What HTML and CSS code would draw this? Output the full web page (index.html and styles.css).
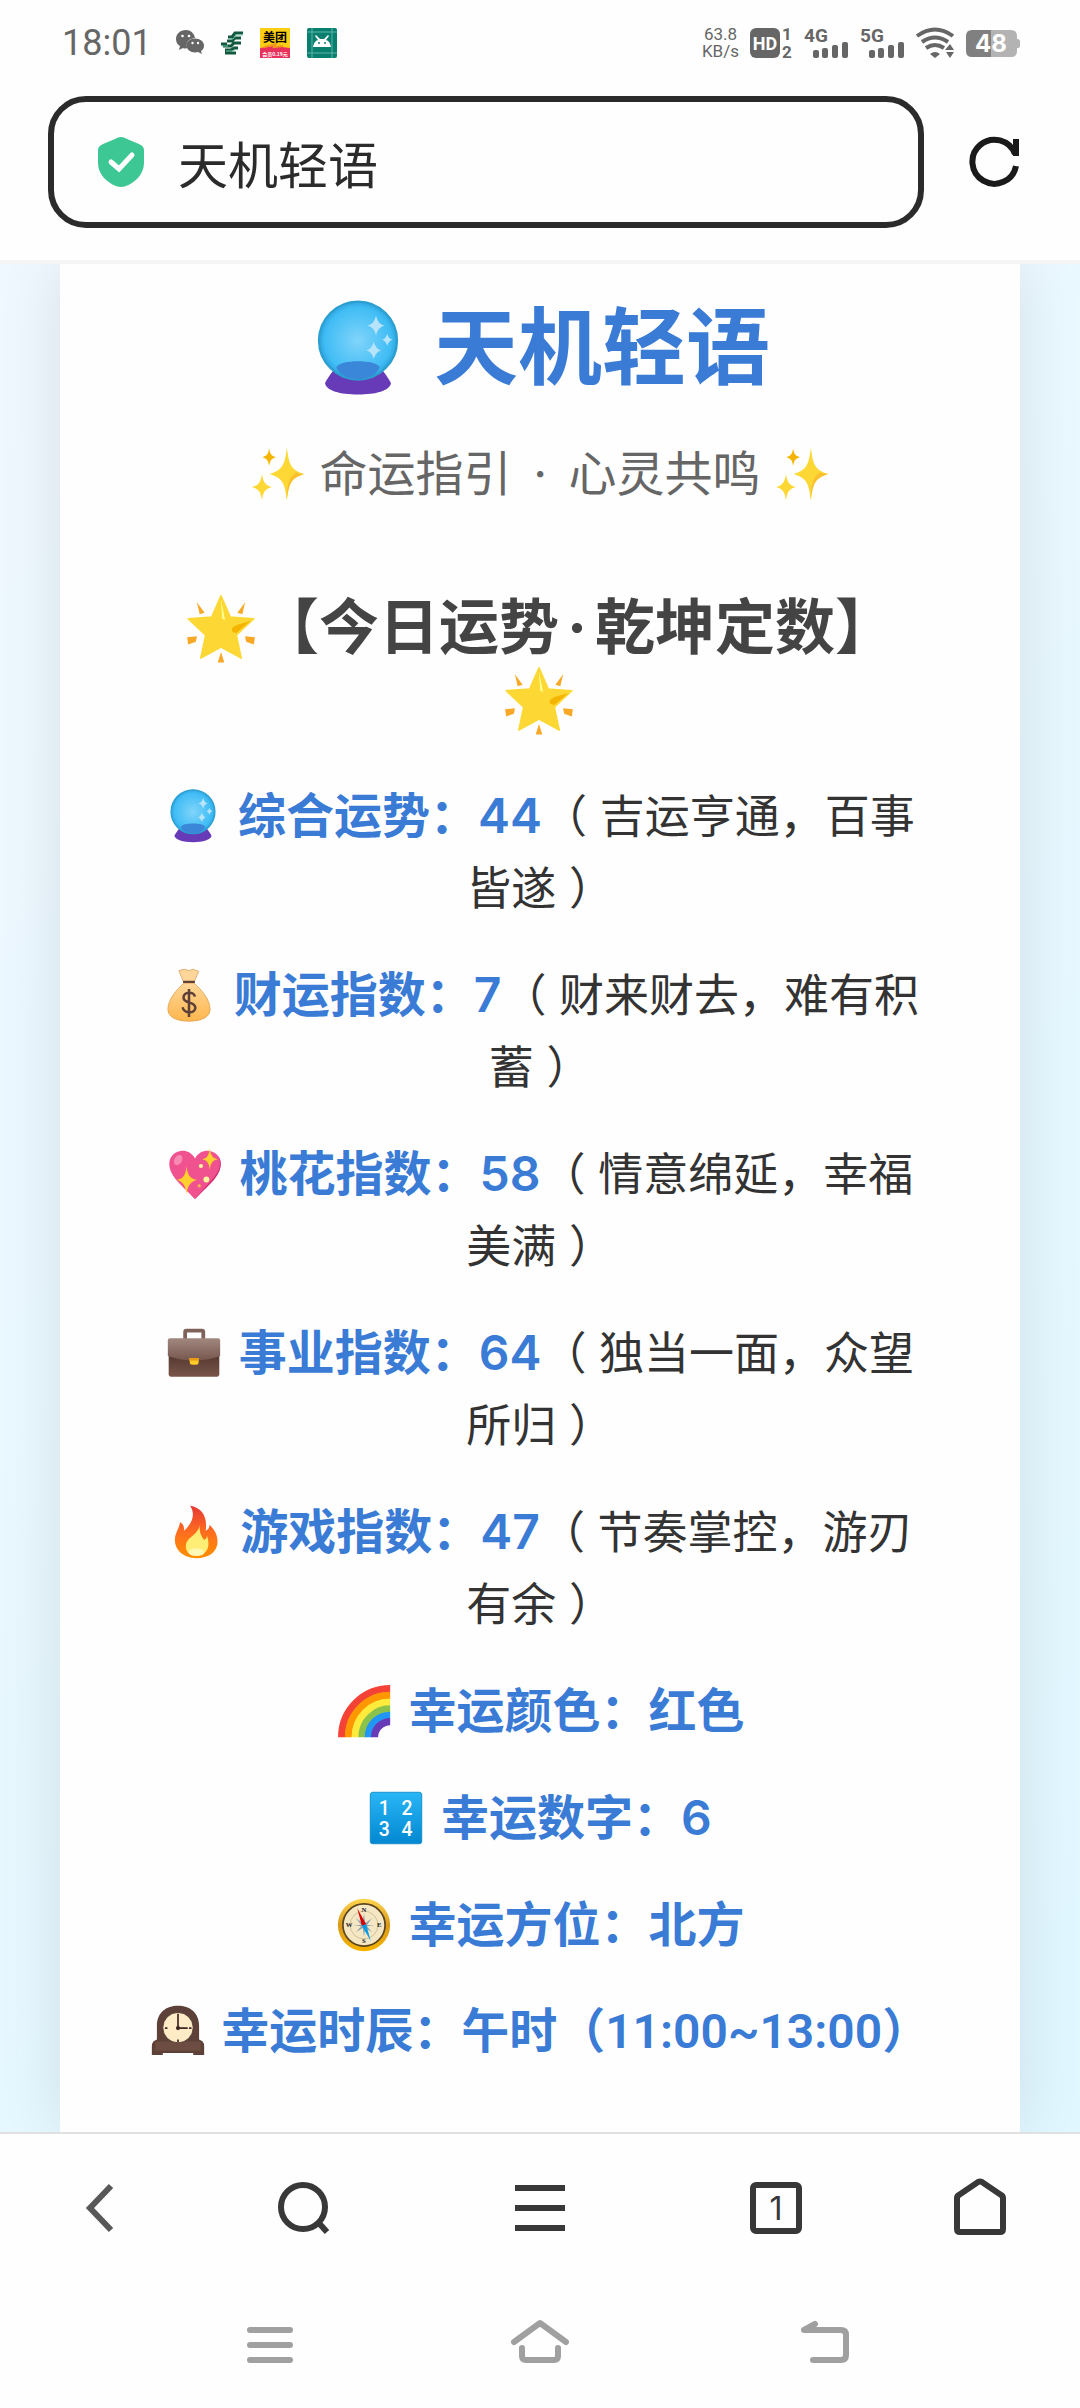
FILE: index.html
```html
<!DOCTYPE html>
<html lang="zh-CN">
<head>
    <meta charset="UTF-8">
    <meta name="viewport" content="width=device-width, initial-scale=1.0">
    <title>天机轻语</title>
    <link rel="stylesheet" href="styles.css">
</head>
<body>
    <!-- Shared emoji drawings -->
    <svg class="defs" aria-hidden="true">
        <defs>
            <radialGradient id="ball-fill"><stop offset="0" stop-color="#81d4fa"/><stop offset="0.85" stop-color="#40bdf5"/><stop offset="1" stop-color="#2fa3dd"/></radialGradient>
            <linearGradient id="bag-fill" x2="0" y2="1"><stop offset="0" stop-color="#ffd699"/><stop offset="1" stop-color="#ffb74d"/></linearGradient>
            <linearGradient id="case-fill" x2="0" y2="1"><stop offset="0" stop-color="#a1887f"/><stop offset="1" stop-color="#76574e"/></linearGradient>
            <linearGradient id="case-dark" x2="0" y2="1"><stop offset="0" stop-color="#4e342e"/><stop offset="1" stop-color="#795548"/></linearGradient>
            <linearGradient id="fire-fill" x2="0" y2="1"><stop offset="0" stop-color="#e53935"/><stop offset="0.5" stop-color="#ff6d1f"/><stop offset="1" stop-color="#ff8f00"/></linearGradient>
            <linearGradient id="key-fill" x2="0" y2="1"><stop offset="0" stop-color="#29b6f6"/><stop offset="1" stop-color="#0288d1"/></linearGradient>
            <linearGradient id="gold-fill" x2="0" y2="1"><stop offset="0" stop-color="#ffd54f"/><stop offset="0.5" stop-color="#d99a1c"/><stop offset="1" stop-color="#f5b400"/></linearGradient>
            <symbol id="crystal-ball" viewBox="0 0 128 128">
                <path d="M34 90h60c4 6 11 14 14 21-2 10-20 15-44 15s-42-5-44-15c3-7 10-15 14-21z" fill="#673ab7"/>
                <circle cx="64" cy="54" r="52" fill="url(#ball-fill)" stroke="#2a9fd0" stroke-width="3"/>
                <path d="M35 90c4-11 54-11 58 0-10 21-48 21-58 0z" fill="#3a86d8"/>
                <path d="M88 21q3 12 11 13-8 2-11 13-3-11-11-13 8-1 11-13zM103 45q2 7 7 8-5 1-7 8-2-7-7-8 5-1 7-8zM85 56q3 10 10 11-7 2-10 11-3-9-10-11 7-1 10-11z" fill="#b8e4fb"/>
            </symbol>
            <symbol id="sparkles" viewBox="0 0 128 128">
                <path d="M85 1c5 42 10 53 41 63-31 10-36 21-41 63-5-42-10-53-41-63 31-10 36-21 41-63zM26 64c3 20 8 27 24 31-16 4-21 11-24 31-3-20-8-27-24-31 16-4 21-11 24-31z" fill="#fdd835"/>
                <path d="M43 3c2 13 5 18 16 21-11 3-14 8-16 21-2-13-5-18-16-21 11-3 14-8 16-21z" fill="#f4b400"/>
                <path d="M105 61l21 3c-31 10-36 21-41 63 0-35 3-53 20-66z" fill="#fbc02d"/>
            </symbol>
            <symbol id="glowing-star" viewBox="0 0 128 128">
                <path d="M64 5l17 39 43 3-32 30 9 42-37-20-37 20 9-42L4 47l43-3z" fill="#fdd835" stroke="#fdd835" stroke-width="3" stroke-linejoin="round"/>
                <path d="M64 12l7 35q1 5-5-1z" fill="#ffff8d"/>
                <path d="M118 51L92 73q-10 0-8-8 4-6 13-8z" fill="#f4b400"/>
                <path d="M20 17l14 19-9 3zM108 17L94 36l9 3zM2 81l18-2-2 10-14 5zM126 81l-18-2 2 10 14 5zM64 108l6 19H58z" fill="#f9a825"/>
            </symbol>
            <symbol id="money-bag" viewBox="0 0 128 128">
                <path d="M50 31L40 6l13-3 11 3 10-3 13 5-10 23z" fill="#ffd699" stroke="#d8a766" stroke-width="2"/>
                <path d="M52 36h24c16 14 38 38 38 62 0 18-20 28-50 28S14 116 14 98c0-24 22-48 38-62z" fill="url(#bag-fill)" stroke="#e0a048" stroke-width="2"/>
                <path d="M50 33h28" stroke="#5d4037" stroke-width="5"/>
                <path d="M64 50v66M78 68c-2-14-27-12-27 2 0 16 28 8 28 24 0 15-28 15-30-1" fill="none" stroke="#5d4037" stroke-width="6"/>
            </symbol>
            <symbol id="heart" viewBox="0 0 128 128">
                <path d="M64 124C36 92 4 72 3 40 3 8 47-4 64 27 81-4 125 8 125 40c-1 32-33 52-61 84z" fill="#f0528f"/>
                <path d="M118 20c20 37-22 61-54 104 28-32 60-52 61-84q0-12-7-20z" fill="#cf2b70"/>
                <ellipse cx="24" cy="31" rx="9" ry="13" fill="#f78ab3" transform="rotate(30 24 31)"/>
                <path d="M44 46c3 22 10 30 25 32-15 3-22 12-25 34-3-22-9-31-24-34 15-2 21-10 24-32zM99 3c2 18 8 24 19 26-11 2-17 8-19 25-2-17-7-23-18-25 11-2 16-8 18-26z" fill="#fdd02f"/>
                <circle cx="78" cy="45" r="5" fill="#fff59d"/><circle cx="91" cy="77" r="7" fill="#fff59d"/><circle cx="74" cy="92" r="4" fill="#ffb74d"/>
            </symbol>
            <symbol id="briefcase" viewBox="0 0 128 128">
                <path d="M43 31V14q0-3 3-3h37q3 0 3 3v17" fill="none" stroke="#7e625a" stroke-width="9"/>
                <path d="M4 60h120v55q0 5-5 5H9q-5 0-5-5z" fill="url(#case-dark)"/>
                <path d="M2 34q0-5 5-5h114q5 0 5 5v37Q94 82 64 82T2 71z" fill="url(#case-fill)"/>
                <path d="M53 76h22v10q0 6-6 6h-9q-6 0-6-6z" fill="#ffca28"/><path d="M53 76h22v6H53z" fill="#e89a15"/>
            </symbol>
            <symbol id="fire" viewBox="0 0 128 128">
                <path d="M50 2c28 4 42 27 37 59 6-2 9-7 9-14 13 12 19 25 19 40 0 25-22 39-50 39S14 109 14 83c0-17 10-26 12-42 8 4 10 10 10 20 18-17 28-38 14-59z" fill="url(#fire-fill)"/>
                <path d="M73 47c-2 21 5 27 10 36 5-2 6-5 7-10 10 29-2 46-24 46-18 0-27-9-26-22 1-22 29-24 33-50z" fill="#ffee75"/>
                <ellipse cx="65" cy="112" rx="19" ry="9" fill="#fff9b8"/>
            </symbol>
            <symbol id="rainbow" viewBox="0 0 128 128">
                <g fill="none" stroke-width="17">
                    <path d="M11 126A115 115 0 0 1 126 11" stroke="#f44336"/><path d="M27 126A99 99 0 0 1 126 27" stroke="#ff9800"/><path d="M43 126A83 83 0 0 1 126 43" stroke="#ffeb3b"/><path d="M59 126A67 67 0 0 1 126 59" stroke="#8bc34a"/><path d="M74 126A52 52 0 0 1 126 74" stroke="#2196f3"/><path d="M89 126A37 37 0 0 1 126 89" stroke="#673ab7"/>
                </g>
            </symbol>
            <symbol id="numbers" viewBox="0 0 128 128">
                <rect x="3" y="3" width="122" height="122" rx="6" fill="url(#key-fill)" stroke="#0a86c4" stroke-width="2"/>
                <g fill="#fff" font-family="Roboto, sans-serif" font-size="46" font-weight="500" text-anchor="middle"><text x="36" y="58">1</text><text x="90" y="58">2</text><text x="36" y="106">3</text><text x="90" y="106">4</text></g>
            </symbol>
            <symbol id="compass" viewBox="0 0 128 128">
                <circle cx="64" cy="64" r="62" fill="url(#gold-fill)"/><circle cx="64" cy="64" r="50" fill="#f6e7c4" stroke="#5b4520" stroke-width="4"/>
                <circle cx="64" cy="64" r="33" fill="none" stroke="#c9b98f" stroke-width="2"/>
                <path d="M64 36l3 23 16-11-12 16 18 0-18 3 12 14-16-10-3 20-3-20-16 10 12-14-18-3h18L45 48l16 11z" fill="#90a4ae"/>
                <path d="M48 24l21 38-10 4z" fill="#d50000"/><path d="M80 102L59 66l10-4z" fill="#039be5"/>
                <g fill="#222" font-family="Liberation Serif, serif" font-weight="bold" font-size="16" text-anchor="middle"><text x="64" y="32">N</text><text x="64" y="107">S</text><text x="29" y="69">W</text><text x="100" y="69">E</text></g>
            </symbol>
            <symbol id="clock" viewBox="0 0 128 128">
                <path d="M14 84V52C14 20 36 4 64 4s50 16 50 48v32l8 4q4 4 4 14v19h-26v-5H28v5H2v-19q0-10 4-14z" fill="#5d4037"/>
                <path d="M10 100h108" stroke="#6d4c41" stroke-width="22"/>
                <circle cx="64" cy="56" r="36" fill="#ffecc7" stroke="#4a322b" stroke-width="2"/>
                <path d="M64 26v31h23M64 23v6M64 84v6M33 57h6M90 57h6" fill="none" stroke="#3e2723" stroke-width="4"/><circle cx="64" cy="57" r="5" fill="#3e2723"/>
            </symbol>
        </defs>
    </svg>

    <!-- Status bar -->
    <div class="status-bar">
        <span class="time">18:01</span>
        <div class="notices">
            <svg width="28" height="26" viewBox="0 0 28 26" fill="#666"><path d="M10 0C4 0 0 4 0 9q0 5 4 7l-1 4 4-2q2 1 4 0-2-9 8-10Q17 0 10 0z"/><path d="M19 8.500c-5 0-8.500 3-8.500 7s4 7 8.500 7l3-.5 4 2-1-3q3-2 3-5.500c0-4-4-7-9-7z"/><circle cx="6.500" cy="6" r="1.300" fill="#fff"/><circle cx="13" cy="6" r="1.300" fill="#fff"/><circle cx="16.500" cy="13" r="1.200" fill="#fff"/><circle cx="22" cy="13" r="1.200" fill="#fff"/></svg>
            <svg width="22" height="24" viewBox="0 0 22 24" fill="none" stroke="#14593f" stroke-width="3"><path d="M22 2h-8l-3 4H7M20 7h-6l-3 3H6M0 13h6M20 12h-7l-3 3H2M17 17h-4l-3 2H4M15 22H4"/><path d="M22 4h-7l-3 4H8M1 15h6M14 20H5" stroke="#6fc3a0" stroke-width="1"/></svg>
            <svg width="30" height="30" viewBox="0 0 30 30"><path fill="#fccf14" d="M0 0h30v21H0z"/><path fill="#e8315b" d="M0 20l14-2 16 2v10H0z"/><path d="M4 19l12-3-2 3 9-1" stroke="#f39a1d" stroke-width="2" fill="none"/><text x="15" y="14" font-family="Noto Sans CJK SC, sans-serif" font-size="12" font-weight="bold" text-anchor="middle">美团</text><text x="15" y="28" font-family="Noto Sans CJK SC, sans-serif" font-size="5" font-weight="bold" fill="#fff" text-anchor="middle">会员0.19元</text></svg>
            <svg width="30" height="30" viewBox="0 0 30 30"><rect width="30" height="30" rx="2" fill="#087f6f"/><path d="M5 0v30M25 0v30M0 4h30M0 25h30" stroke="#5db5a8"/><path d="M6 19q1-6 5-7L8 8l1-1 4 4h4l4-4 1 1-3 4q4 1 5 7z" fill="#fff"/><circle cx="12" cy="15" r="1" fill="#087f6f"/><circle cx="18" cy="15" r="1" fill="#087f6f"/></svg>
        </div>
        <div class="signals">
            <span class="speed">63.8<br>KB/s</span>
            <svg width="43" height="30" viewBox="0 0 43 30" fill="#666"><rect width="30" height="30" rx="6"/><g font-family="Roboto, sans-serif" font-weight="bold"><text x="15" y="22" font-size="18" fill="#fff" text-anchor="middle">HD</text><text x="37" y="12" font-size="17" text-anchor="middle">1</text><text x="37" y="30" font-size="17" text-anchor="middle">2</text></g></svg>
            <svg width="45" height="30" viewBox="0 0 45 30" fill="#666"><text x="0" y="14" font-family="Roboto, sans-serif" font-weight="bold" font-size="19">4G</text><rect x="9" y="22" width="6" height="8" rx="2"/><rect x="18" y="20" width="6" height="10" rx="2"/><rect x="28" y="17" width="6" height="13" rx="2"/><rect x="38" y="14" width="6" height="16" rx="2"/></svg>
            <svg width="45" height="30" viewBox="0 0 45 30" fill="#666"><text x="0" y="14" font-family="Roboto, sans-serif" font-weight="bold" font-size="19">5G</text><rect x="9" y="22" width="6" height="8" rx="2"/><rect x="18" y="20" width="6" height="10" rx="2"/><rect x="28" y="17" width="6" height="13" rx="2"/><rect x="38" y="14" width="6" height="16" rx="2"/></svg>
            <svg width="39" height="30" viewBox="0 0 39 30"><g fill="none" stroke="#666" stroke-width="4"><path d="M1 8q18-13 36 0M6 14q13-9 26 0M10 20q9-6 18 0"/></g><path d="M14 26q5-4 10 0l-5 4zM34 16l4 6h-9zM34 30l-4-6h8z" fill="#666"/></svg>
            <svg width="54" height="27" viewBox="0 0 54 27"><path d="M6 0h19v27H6q-6 0-6-6V6q0-6 6-6z" fill="#808080"/><path d="M25 0h20q6 0 6 6v3q3 0 3 2v5q0 2-3 2v3q0 6-6 6H25z" fill="#b3b3b3"/><text x="25" y="22" font-family="Inter, sans-serif" font-size="24" font-weight="bold" fill="#fff" text-anchor="middle">48</text></svg>
        </div>
    </div>

    <!-- Address bar -->
    <header class="address-bar">
        <div class="address-box">
            <svg width="46" height="50" viewBox="0 0 46 50"><path d="M17 2q6-4 12 0l12 5q5 2 5 6v13c0 12-10 20-18 23q-5 2-10 0C10 46 0 38 0 26V13q0-4 5-6z" fill="#3dc795"/><path d="M13 25l8 7 13-14" fill="none" stroke="#fff" stroke-width="5" stroke-linecap="round"/></svg>
            <input type="text" value="天机轻语" aria-label="地址栏">
        </div>
        <button class="reload" aria-label="刷新"><svg width="50" height="52" viewBox="0 0 50 52" fill="none" stroke="#1a1a1a" stroke-width="6"><path d="M45 18A22 22 0 1 0 46 30M46 3v17"/></svg></button>
    </header>

    <!-- Fortune page -->
    <main>
        <div class="container">
            <h1><svg class="emoji"><use href="#crystal-ball"/></svg> 天机轻语</h1>
            <p class="subtitle"><svg class="emoji"><use href="#sparkles"/></svg> 命运指引 <span class="dot">·</span> 心灵共鸣 <svg class="emoji"><use href="#sparkles"/></svg></p>
            <h2><svg class="emoji"><use href="#glowing-star"/></svg>【今日运势<span class="dot">·</span>乾坤定数】<svg class="emoji"><use href="#glowing-star"/></svg></h2>
            <div class="fortune">
                <p><svg class="emoji"><use href="#crystal-ball"/></svg> <strong>综合运势：44</strong>（ 吉运亨通，百事皆遂 ）</p>
                <p><svg class="emoji"><use href="#money-bag"/></svg> <strong>财运指数：7</strong>（ 财来财去，难有积蓄 ）</p>
                <p><svg class="emoji"><use href="#heart"/></svg> <strong>桃花指数：58</strong>（ 情意绵延，幸福美满 ）</p>
                <p><svg class="emoji"><use href="#briefcase"/></svg> <strong>事业指数：64</strong>（ 独当一面，众望所归 ）</p>
                <p><svg class="emoji"><use href="#fire"/></svg> <strong>游戏指数：47</strong>（ 节奏掌控，游刃有余 ）</p>
                <p><svg class="emoji"><use href="#rainbow"/></svg> <strong>幸运颜色：红色</strong></p>
                <p><svg class="emoji"><use href="#numbers"/></svg> <strong>幸运数字：6</strong></p>
                <p><svg class="emoji"><use href="#compass"/></svg> <strong>幸运方位：北方</strong></p>
                <p class="lucky-hour"><svg class="emoji"><use href="#clock"/></svg> <strong>幸运时辰：午时（11:00~13:00）</strong></p>
            </div>
        </div>
    </main>

    <!-- Browser toolbar -->
    <nav class="toolbar">
        <button aria-label="后退"><svg class="back" width="56" height="56" viewBox="0 0 56 56"><path d="M39 6L18 28l21 22"/></svg></button>
        <button aria-label="搜索"><svg width="56" height="56" viewBox="0 0 56 56"><circle cx="27" cy="27" r="22"/><path d="M41 41l10 11"/></svg></button>
        <button aria-label="菜单"><svg width="56" height="56" viewBox="0 0 56 56"><path d="M3 8h50M3 28h50M3 48h50"/></svg></button>
        <button aria-label="标签页" class="tabs">1</button>
        <button aria-label="主页"><svg width="56" height="60" viewBox="0 0 56 60"><path d="M26 4q2-1 4 0l19 13q2 1 2 3v31q0 3-3 3H8q-3 0-3-3V20q0-2 2-3z"/></svg></button>
    </nav>

    <!-- System navigation -->
    <nav class="system-nav">
        <button aria-label="最近任务"><svg width="80" height="50" viewBox="0 0 80 50"><path d="M20 10h40M20 25h40M20 40h40"/></svg></button>
        <button aria-label="桌面"><svg width="80" height="50" viewBox="0 0 80 50"><path d="M14 22L40 3l26 19M22 28v8q0 4 4 4h28q4 0 4-4v-8"/></svg></button>
        <button aria-label="返回"><svg width="80" height="50" viewBox="0 0 80 50"><path d="M45 4l-11 6h37q5 0 5 5v20q0 5-5 5H43"/></svg></button>
    </nav>
</body>
</html>
```

FILE: styles.css
```css
* {
    box-sizing: border-box;
}

body {
    font-family: Inter, 'Noto Sans CJK SC', sans-serif;
    margin: 0;
    min-height: 100vh;
    display: flex;
    flex-direction: column;
    background-color: #fefefe;
    color: #333;
}

button {
    background: none;
    border: none;
    padding: 0;
    display: flex;
    align-items: center;
    justify-content: center;
}

svg {
    overflow: visible;
}

.defs {
    position: absolute;
    width: 0;
    height: 0;
}

/* Status bar */
.status-bar {
    display: flex;
    align-items: center;
    height: 86px;
    padding: 0 60px 0 62px;
    color: #666;
    font-family: Roboto, sans-serif;
}

.time {
    font-size: 36px;
    margin-right: 24px;
}

.notices {
    display: flex;
    align-items: center;
    gap: 17px;
}

.signals {
    display: flex;
    align-items: center;
    gap: 11px;
    margin-left: auto;
}

.speed {
    font-size: 17px;
    line-height: 17px;
    text-align: center;
}

/* Address bar */
.address-bar {
    display: flex;
    align-items: center;
    gap: 46px;
    padding: 10px 60px 32px 48px;
    border-bottom: 4px solid #f5f5f5;
}

.address-box {
    flex: 1;
    min-width: 0;
    display: flex;
    align-items: center;
    gap: 34px;
    height: 132px;
    padding: 0 44px;
    border: 6px solid #2b2b2b;
    border-radius: 38px;
}

.address-box input {
    flex: 1;
    min-width: 0;
    padding: 0;
    border: none;
    outline: none;
    background: none;
    font-family: inherit;
    font-size: 50px;
    color: #2b2b2b;
}

/* Page background */
main {
    flex: 1;
    display: flex;
    overflow: hidden;
    padding: 0 60px;
    background: linear-gradient(135deg, #f0f8ff, #e0f7ff);
}

.container {
    flex: 1;
    padding: 21px 90px 28px;
    background-color: #fefefe;
    box-shadow: 0 0 60px rgba(0, 0, 0, 0.1);
    text-align: center;
}

.emoji {
    width: 56px;
    height: 54px;
    vertical-align: -10px;
}

.dot {
    display: inline-block;
    width: 36px;
}

h1 {
    margin: 0 0 27px;
    font-size: 84px;
    line-height: 126px;
    color: #3a7bd5;
}

h1 .emoji {
    width: 96px;
    height: 96px;
    margin-right: 8px;
    vertical-align: -18px;
}

.subtitle {
    margin: 0 0 81px;
    font-size: 48px;
    line-height: 72px;
    color: #666;
}

.subtitle .dot {
    width: 30px;
}

h2 {
    margin: 0 0 46px;
    font-size: 60px;
    line-height: 72px;
    color: #444;
}

h2 .emoji {
    width: 72px;
    height: 70px;
    margin-right: 2px;
    vertical-align: -14px;
}

/* Fortune lines */
.fortune p {
    margin: 0 0 35px;
    font-size: 45px;
    line-height: 72px;
}

.fortune .emoji {
    margin-right: 4px;
}

.fortune strong {
    font-size: 48px;
    font-weight: 600;
    line-height: 60px;
    color: #3a7bd5;
}

.fortune .lucky-hour {
    font-family: Roboto, 'Noto Sans CJK SC', sans-serif;
    white-space: nowrap;
}

/* Browser toolbar */
.toolbar {
    display: grid;
    grid-template-columns: 19fr 20fr 25fr 20fr 19fr;
    align-items: center;
    justify-items: center;
    height: 150px;
    border-top: 2px solid #e0e0e0;
}

.toolbar svg {
    fill: none;
    stroke: #383838;
    stroke-width: 6;
}

.toolbar .back {
    stroke: #585858;
}

.tabs {
    width: 52px;
    height: 52px;
    border: 6px solid #383838;
    border-radius: 6px;
    font-family: Inter, sans-serif;
    font-size: 32px;
    color: #383838;
}

/* System navigation */
.system-nav {
    display: grid;
    grid-template-columns: repeat(3, 1fr);
    justify-items: center;
    align-items: center;
    height: 126px;
    padding: 0 135px;
}

.system-nav svg {
    fill: none;
    stroke: #a0a0a0;
    stroke-width: 6;
    stroke-linecap: round;
    stroke-linejoin: round;
}
```
